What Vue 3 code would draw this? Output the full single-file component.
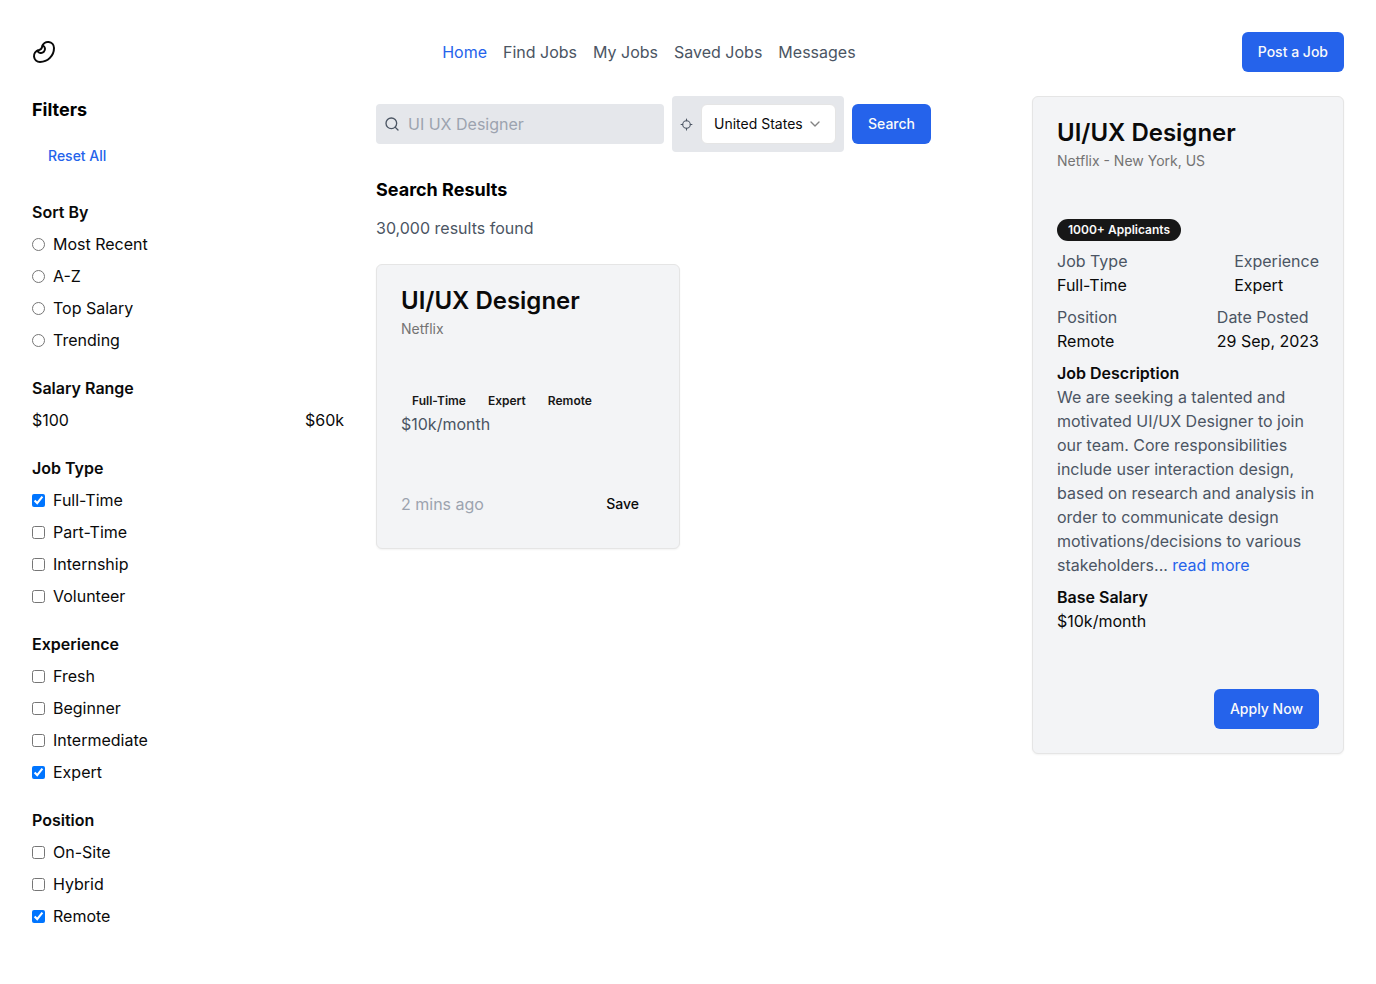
<script setup>
import { ref } from 'vue'

const navLinks = ['Home', 'Find Jobs', 'My Jobs', 'Saved Jobs', 'Messages']
const sortOptions = ['Most Recent', 'A-Z', 'Top Salary', 'Trending']
const sortBy = ref('')
const query = ref('')
const country = ref('United States')
const checkGroups = [
  { title: 'Job Type', options: ['Full-Time', 'Part-Time', 'Internship', 'Volunteer'] },
  { title: 'Experience', options: ['Fresh', 'Beginner', 'Intermediate', 'Expert'] },
  { title: 'Position', options: ['On-Site', 'Hybrid', 'Remote'] },
]
const selected = ref(['Full-Time', 'Expert', 'Remote'])
const tags = ['Full-Time', 'Expert', 'Remote']

function resetAll() {
  sortBy.value = ''
  selected.value = []
}
</script>

<template>
  <div class="page">
    <header class="topbar">
      <svg class="logo" viewBox="0 0 24 24" aria-hidden="true">
        <path d="M10.165 6.598C9.954 7.478 9.64 8.36 9 9c-.64.64-1.521.954-2.402 1.165A6 6 0 0 0 8 22c7.732 0 14-6.268 14-14a6 6 0 0 0-11.835-1.402Z" />
        <path d="M5.341 10.62a4 4 0 1 0 5.279-5.28" />
      </svg>
      <nav class="nav">
        <a v-for="(link, i) in navLinks" :key="link" href="#" :class="{ active: i === 0 }">{{ link }}</a>
      </nav>
      <button type="button" class="btn primary">Post a Job</button>
    </header>

    <div class="columns">
      <aside class="filters">
        <div class="filters-head">
          <h2 class="heading">Filters</h2>
          <button type="button" class="btn link" @click="resetAll">Reset All</button>
        </div>

        <fieldset class="group">
          <legend>Sort By</legend>
          <label v-for="option in sortOptions" :key="option" class="choice">
            <input v-model="sortBy" type="radio" name="sort" :value="option" />
            <span>{{ option }}</span>
          </label>
        </fieldset>

        <section class="group">
          <h3>Salary Range</h3>
          <div class="between"><span>$100</span><span>$60k</span></div>
        </section>

        <fieldset v-for="group in checkGroups" :key="group.title" class="group">
          <legend>{{ group.title }}</legend>
          <label v-for="option in group.options" :key="option" class="choice">
            <input v-model="selected" type="checkbox" :value="option" />
            <span>{{ option }}</span>
          </label>
        </fieldset>
      </aside>

      <main class="main">
        <form class="search" @submit.prevent>
          <label class="query">
            <svg class="icon" viewBox="0 0 24 24" aria-hidden="true">
              <circle cx="11" cy="11" r="8" />
              <path d="m21 21-4.3-4.3" />
            </svg>
            <input v-model="query" type="text" placeholder="UI UX Designer" aria-label="Job title" />
          </label>
          <label class="location">
            <svg class="icon small" viewBox="0 0 24 24" aria-hidden="true">
              <path d="M2 12h3M19 12h3M12 2v3M12 19v3" />
              <circle cx="12" cy="12" r="7" />
            </svg>
            <span class="select">
              <select v-model="country" aria-label="Country">
                <option>United States</option>
              </select>
              <svg class="chevron" viewBox="0 0 24 24" aria-hidden="true"><path d="m6 9 6 6 6-6" /></svg>
            </span>
          </label>
          <button type="submit" class="btn primary">Search</button>
        </form>

        <div class="results-head">
          <h2 class="heading">Search Results</h2>
          <p class="muted">30,000 results found</p>
        </div>

        <div class="results">
          <article class="card">
            <h3 class="title">UI/UX Designer</h3>
            <p class="company">Netflix</p>
            <div class="tags">
              <span v-for="tag in tags" :key="tag" class="badge">{{ tag }}</span>
            </div>
            <p class="muted">$10k/month</p>
            <div class="card-foot">
              <span class="time">2 mins ago</span>
              <button type="button" class="btn ghost">Save</button>
            </div>
          </article>
        </div>
      </main>

      <article class="card detail">
        <h2 class="title">UI/UX Designer</h2>
        <p class="company">Netflix - New York, US</p>
        <div class="detail-body">
          <span class="badge dark">1000+ Applicants</span>
          <div class="between">
            <div><p class="muted">Job Type</p><p>Full-Time</p></div>
            <div><p class="muted">Experience</p><p>Expert</p></div>
          </div>
          <div class="between">
            <div><p class="muted">Position</p><p>Remote</p></div>
            <div><p class="muted">Date Posted</p><p>29 Sep, 2023</p></div>
          </div>
          <div>
            <h3>Job Description</h3>
            <p class="muted">
              We are seeking a talented and motivated UI/UX Designer to join our team. Core
              responsibilities include user interaction design, based on research and analysis in
              order to communicate design motivations/decisions to various stakeholders...
              <a href="#">read more</a>
            </p>
          </div>
          <div>
            <h3>Base Salary</h3>
            <p>$10k/month</p>
          </div>
        </div>
        <div class="apply"><button type="button" class="btn primary">Apply Now</button></div>
      </article>
    </div>
  </div>
</template>

<style>
body {
  margin: 0;
  background: #fff;
}
</style>

<style scoped>
.page {
  padding: 32px;
  font-family: Inter, sans-serif;
  font-size: 16px;
  line-height: 24px;
  color: #0a0a0a;
}
.page * {
  box-sizing: border-box;
}
h2,
h3,
p {
  margin: 0;
}
h3,
legend {
  font-size: 16px;
  font-weight: 600;
  line-height: 24px;
}
a {
  color: #2563eb;
  text-decoration: none;
}
svg {
  fill: none;
  stroke: currentColor;
  stroke-width: 2;
  stroke-linecap: round;
  stroke-linejoin: round;
  flex-shrink: 0;
}
input,
select,
button {
  font-family: inherit;
}
.topbar {
  display: flex;
  align-items: center;
  justify-content: space-between;
  margin-bottom: 24px;
}
.logo {
  width: 24px;
  height: 24px;
}
.nav {
  display: flex;
  gap: 16px;
}
.nav a {
  color: #4b5563;
}
.nav a.active {
  color: #2563eb;
}
.btn {
  height: 40px;
  padding: 0 16px;
  border: 0;
  border-radius: 6px;
  background: transparent;
  font-size: 14px;
  font-weight: 500;
  line-height: 20px;
  color: #0a0a0a;
  cursor: pointer;
}
.btn.primary {
  background: #2563eb;
  color: #fafafa;
}
.btn.link {
  color: #2563eb;
}
.columns {
  display: grid;
  grid-template-columns: minmax(0, 1fr) minmax(0, 2fr) minmax(0, 1fr);
  gap: 32px;
  align-items: start;
}
.filters {
  display: flex;
  flex-direction: column;
  gap: 24px;
}
.filters-head {
  display: flex;
  flex-direction: column;
  align-items: flex-start;
  gap: 12px;
}
.heading {
  font-size: 18px;
  font-weight: 700;
  line-height: 28px;
  color: #000;
}
.group {
  min-width: 0;
  margin: 0;
  padding: 0;
  border: 0;
}
.group legend {
  padding: 0;
}
.group .choice,
.group .between {
  margin-top: 8px;
}
.choice {
  display: flex;
  align-items: center;
  gap: 8px;
}
.choice input {
  width: 13px;
  height: 13px;
  margin: 0;
}
.between {
  display: flex;
  justify-content: space-between;
}
.search {
  display: flex;
  align-items: center;
  gap: 8px;
}
.query,
.location {
  display: flex;
  align-items: center;
  gap: 8px;
  padding: 8px;
  border-radius: 4px;
  background: #e5e7eb;
}
.query input {
  width: 248px;
  height: 24px;
  padding: 0;
  border: 0;
  outline: 0;
  background: transparent;
  font-size: 16px;
  color: #0a0a0a;
}
.query input::placeholder {
  color: #9ca3af;
}
.icon {
  width: 16px;
  height: 16px;
  color: #4b5563;
}
.icon.small {
  width: 13px;
  height: 13px;
}
.select {
  position: relative;
  display: flex;
}
.select select {
  appearance: none;
  width: 135px;
  height: 40px;
  padding: 0 28px 2px 12px;
  border: 1px solid #e5e5e5;
  border-radius: 6px;
  background: #fff;
  font-size: 14px;
  color: #0a0a0a;
}
.chevron {
  position: absolute;
  top: 12px;
  right: 13px;
  width: 16px;
  height: 16px;
  opacity: 0.5;
  pointer-events: none;
}
.results-head {
  display: flex;
  flex-direction: column;
  gap: 12px;
  margin: 24px 0;
}
.results {
  display: grid;
  grid-template-columns: repeat(2, minmax(0, 1fr));
  gap: 16px;
}
.muted {
  color: #4b5563;
}
.card {
  padding: 24px;
  border: 1px solid #e5e5e5;
  border-radius: 6px;
  background: #f3f4f6;
  box-shadow: 0 1px 2px rgba(0, 0, 0, 0.05);
}
.title {
  font-size: 24px;
  font-weight: 600;
  line-height: 24px;
}
.company {
  margin-top: 6px;
  font-size: 14px;
  line-height: 20px;
  color: #737373;
}
.tags {
  display: flex;
  margin-top: 51px;
}
.badge {
  padding: 2px 10px;
  border: 1px solid transparent;
  border-radius: 11px;
  font-size: 12px;
  font-weight: 600;
  line-height: 16px;
  color: #171717;
}
.badge.dark {
  align-self: flex-start;
  background: #171717;
  color: #fafafa;
}
.card-foot {
  display: flex;
  align-items: center;
  justify-content: space-between;
  margin-top: 48px;
}
.time {
  color: #9ca3af;
}
.detail-body {
  display: flex;
  flex-direction: column;
  gap: 8px;
  margin-top: 48px;
}
.apply {
  display: flex;
  justify-content: flex-end;
  margin-top: 56px;
}
</style>
